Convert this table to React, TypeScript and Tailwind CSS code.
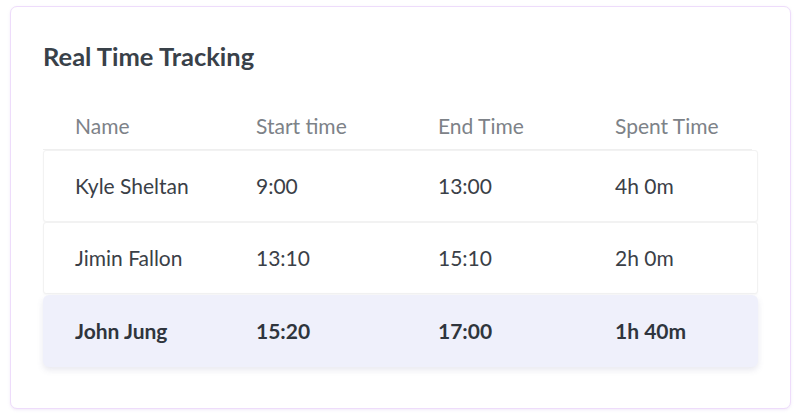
const rows = [
  { name: "Kyle Sheltan", start: "9:00", end: "13:00", spent: "4h 0m" },
  { name: "Jimin Fallon", start: "13:10", end: "15:10", spent: "2h 0m" },
  { name: "John Jung", start: "15:20", end: "17:00", spent: "1h 40m", active: true },
]

export default function App() {
  return (
    <div className="h-[420px] w-[800px] bg-white pl-[10px] pt-[6px] font-['Lato','Open_Sans',sans-serif]">
      <div className="h-[403px] w-[781px] rounded-[7px] border border-[#eedcfb] bg-white px-[32px] pt-[34px] shadow-[0_1px_3px_rgba(200,170,230,0.25)]">
        <h2 className="text-[25.5px] font-bold leading-[30px] text-[#394149]">Real Time Tracking</h2>

        {/* Table */}
        <div className="mt-[43px]">
          <div className="mr-[6px] grid h-[36px] grid-cols-[181px_182px_177px_1fr] border-b border-[#efefef] pl-[32px] text-[21px] leading-[24px] text-[#7d8288]">
            <span>Name</span>
            <span>Start time</span>
            <span>End Time</span>
            <span>Spent Time</span>
          </div>

          {rows.map((r) => (
            <div
              key={r.name}
              className={
                r.active
                  ? "mt-[1px] grid h-[72px] grid-cols-[181px_182px_177px_1fr] items-center rounded-[6px] bg-[#eff0fb] pl-[32px] text-[21px] font-bold text-[#2f353d] shadow-[0_3px_6px_rgba(90,90,140,0.14)]"
                  : "grid h-[72px] grid-cols-[181px_182px_177px_1fr] items-center rounded-[3px] border border-[#f2f2f2] bg-white pl-[31px] text-[21px] text-[#3a4047] shadow-[0_1px_2px_rgba(0,0,0,0.03)]"
              }
            >
              <span>{r.name}</span>
              <span>{r.start}</span>
              <span>{r.end}</span>
              <span>{r.spent}</span>
            </div>
          ))}
        </div>
      </div>
    </div>
  )
}
